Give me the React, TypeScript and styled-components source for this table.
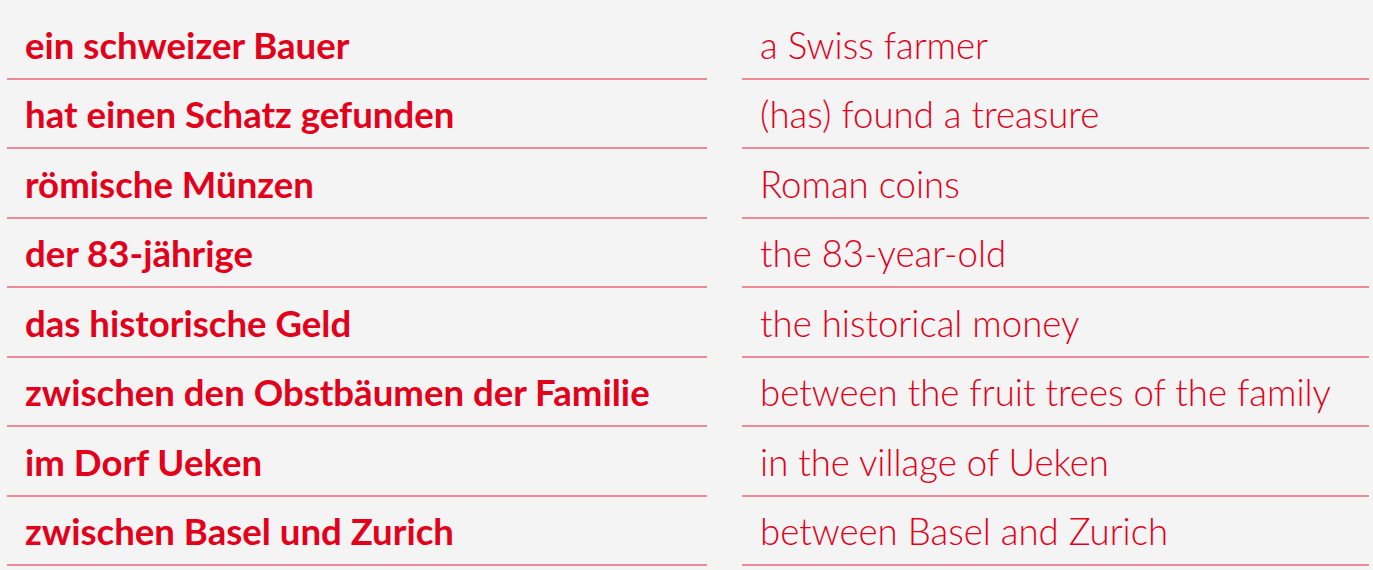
import styled, { createGlobalStyle } from 'styled-components'

type Pair = {
  de: string
  en: string
}

const vocabulary: Pair[] = [
  { de: 'ein schweizer Bauer', en: 'a Swiss farmer' },
  { de: 'hat einen Schatz gefunden', en: '(has) found a treasure' },
  { de: 'römische Münzen', en: 'Roman coins' },
  { de: 'der 83-jährige', en: 'the 83-year-old' },
  { de: 'das historische Geld', en: 'the historical money' },
  { de: 'zwischen den Obstbäumen der Familie', en: 'between the fruit trees of the family' },
  { de: 'im Dorf Ueken', en: 'in the village of Ueken' },
  { de: 'zwischen Basel und Zurich', en: 'between Basel and Zurich' },
]

export default function App() {
  return (
    <>
      <GlobalStyle />
      <VocabTable>
        {vocabulary.map((pair) => (
          <Row key={pair.de}>
            <Cell bold>{pair.de}</Cell>
            <Cell>{pair.en}</Cell>
          </Row>
        ))}
      </VocabTable>
    </>
  )
}

const GlobalStyle = createGlobalStyle`
  html, body {
    margin: 0;
    padding: 0;
    background: #f4f4f4;
  }

  body {
    font-family: Lato, 'Noto Sans', sans-serif;
    overflow: hidden;
  }
`

const VocabTable = styled.div`
  display: flex;
  flex-direction: column;
  padding: 10px 0 0 7px;
  width: 1362px;
`

const Row = styled.div`
  display: grid;
  grid-template-columns: 700px 627px;
  column-gap: 35px;
`

const Cell = styled.div<{ bold?: boolean }>`
  display: flex;
  align-items: center;
  box-sizing: border-box;
  height: 69.5px;
  padding: 2px 0 0 18px;
  border-bottom: 2px solid #ee8a98;
  color: #e2001a;
  font-size: 36.6px;
  font-weight: ${({ bold }) => (bold ? 700 : 300)};
  white-space: nowrap;
`
